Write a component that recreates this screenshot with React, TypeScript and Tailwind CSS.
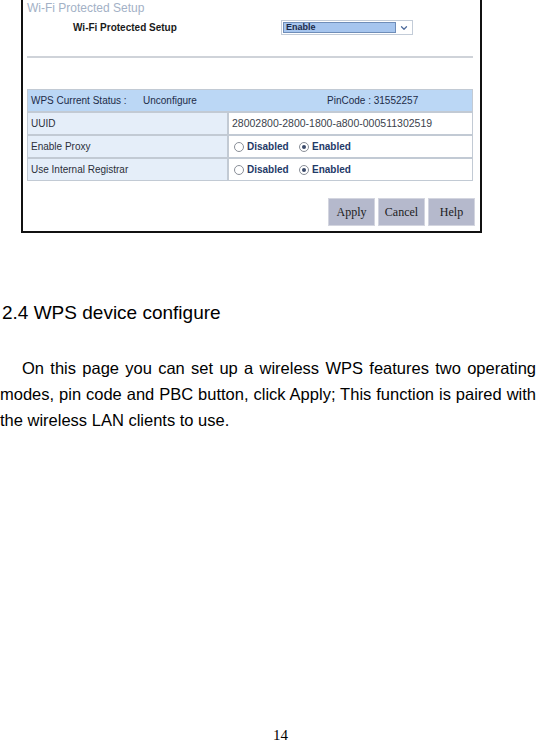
import { ChevronDown } from "lucide-react";

function Radio({ checked }: { checked?: boolean }) {
  return (
    <span className="w-[10px] h-[10px] rounded-full border border-[#8a8f98] bg-white flex items-center justify-center">
      {checked && <span className="w-[4px] h-[4px] rounded-full bg-[#3a4a6a]" />}
    </span>
  );
}

function RadioPair() {
  return (
    <div className="flex items-center pl-[5px] text-[10px] text-[#1f3a68] font-bold">
      <Radio />
      <span className="ml-[3px] w-[52px]">Disabled</span>
      <Radio checked />
      <span className="ml-[3px]">Enabled</span>
    </div>
  );
}

function App() {
  const labelCell = "bg-[#e5eef9] flex items-center pl-[3px] text-[10px] text-[#2b2f3a]";

  return (
    <div className="w-[536px] h-[744px] bg-white flex flex-col overflow-hidden font-['Liberation_Sans',Arial,sans-serif] text-black">
      <div className="ml-[21px] w-[461px] h-[233px] shrink-0 border-x-2 border-b-2 border-[#111] flex flex-col pl-[4px]">
        <div className="text-[12px] leading-[16px] text-[#a3b1c6]">Wi-Fi Protected Setup</div>

        <div className="flex items-center mt-[4px] h-[15px]">
          <div className="ml-[46px] w-[208px] text-[10px] font-bold text-[#1a1a1a]">Wi-Fi Protected Setup</div>
          <div className="w-[132px] h-[15px] border border-[#c3ccd8] bg-white flex p-[1px]">
            <div className="flex-1 bg-[#a6c5ee] border border-[#6f8db8] flex items-center pl-[2px] text-[9px] font-bold text-[#1b2a4a]">
              Enable
            </div>
            <div className="w-[15px] flex items-center justify-center text-[#4f6c9c]">
              <ChevronDown size={10} strokeWidth={3} />
            </div>
          </div>
        </div>

        <div className="mt-[21px] h-[2px] w-[446px] bg-[#cfd3d9]" />

        <div className="mt-[31px] w-[446px] bg-[#c2cad4] p-[1px] grid grid-cols-[199px_1fr] gap-[2px]">
          <div className="col-span-2 h-[21px] bg-[#bbd7f5] flex items-center pl-[3px] text-[10px] text-[#1d2c48]">
            <span className="w-[112px]">WPS Current Status :</span>
            <span className="w-[184px]">Unconfigure</span>
            <span>PinCode : 31552257</span>
          </div>
          <div className={`${labelCell} h-[21px]`}>UUID</div>
          <div className="bg-white flex items-center pl-[3px] text-[10.5px] text-[#3a3f4c]">
            28002800-2800-1800-a800-000511302519
          </div>
          <div className={`${labelCell} h-[21px]`}>Enable Proxy</div>
          <div className="bg-white flex items-center">
            <RadioPair />
          </div>
          <div className={`${labelCell} h-[21px]`}>Use Internal Registrar</div>
          <div className="bg-white flex items-center">
            <RadioPair />
          </div>
        </div>

        <div className="mt-[17px] w-[448px] flex justify-end gap-[3px] font-['Liberation_Serif',serif] text-[12px] text-[#1c1c1c]">
          <button className="w-[47px] h-[28px] bg-[#b5b9cc] border border-[#d3d5df]">Apply</button>
          <button className="w-[47px] h-[28px] bg-[#b5b9cc] border border-[#d3d5df]">Cancel</button>
          <button className="w-[47px] h-[28px] bg-[#b5b9cc] border border-[#d3d5df]">Help</button>
        </div>
      </div>

      <h2 className="mt-[68px] pl-[2px] text-[19px] leading-[24px] font-normal">2.4 WPS device configure</h2>

      <p className="mt-[30px] text-[16.5px] leading-[26px] text-justify indent-[22px]">
        On this page you can set up a wireless WPS features two operating modes, pin code and PBC button, click
        Apply; This function is paired with the wireless LAN clients to use.
      </p>

      <div className="mt-auto pl-[25px] text-center font-['Liberation_Serif',serif] text-[15px] leading-[17px]">
        14
      </div>
    </div>
  );
}

export default App;
